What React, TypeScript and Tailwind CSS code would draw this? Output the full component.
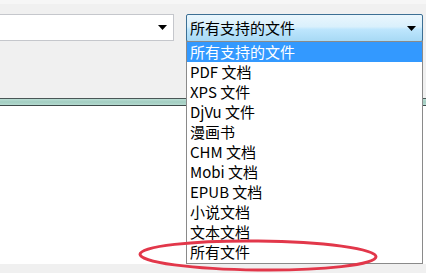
import React from "react";

const items = [
  "所有支持的文件",
  "PDF 文档",
  "XPS 文件",
  "DjVu 文件",
  "漫画书",
  "CHM 文档",
  "Mobi 文档",
  "EPUB 文档",
  "小说文档",
  "文本文档",
  "所有文件",
];

const font = { fontFamily: '"Noto Sans CJK SC", "Noto Sans", sans-serif' };

function Arrow() {
  return (
    <svg width="9" height="5" viewBox="0 0 9 5" className="shrink-0">
      <path d="M0 0 H9 L4.5 5 Z" fill="#000" />
    </svg>
  );
}

export default function App() {
  return (
    <div
      className="relative w-[426px] h-[273px] overflow-hidden bg-[#f0f0f0] flex flex-col text-[15px] text-black"
      style={font}
    >
      <div className="h-[98px] flex flex-col">
        <div className="h-[4px] bg-[#f6f6f6]" />
        <div className="flex items-start pt-[10px]">
          <div className="-ml-[2px] w-[176px] h-[27px] bg-white border border-[#c5c7cc] flex items-center justify-end pr-[6px]">
            <Arrow />
          </div>
          <div className="ml-[12px] w-[237px] h-[28px] rounded-[2px] border border-[#3c6f94] bg-[linear-gradient(#eaf6fd_0%,#d9f0fc_45%,#bee6fd_55%,#a7d9f5_100%)] flex items-center justify-between pl-[3px] pr-[6px] leading-[20px]">
            <span>所有支持的文件</span>
            <Arrow />
          </div>
        </div>
      </div>
      <div className="h-[8px] flex flex-col">
        <div className="h-[1px] bg-[#4a5656]" />
        <div className="h-[6px] bg-[linear-gradient(#b9ddd3,#a2cdc1,#b5dad0)]" />
        <div className="h-[1px] bg-[#3e4a4a]" />
      </div>
      <div className="flex-1 bg-white" />
      <div className="h-[9px] bg-[#f0f0f0]" />

      <div className="absolute left-[186px] top-[41px] w-[237px] h-[223px] bg-white border border-[#8a8a8a] flex flex-col">
        {items.map((t, i) => (
          <div
            key={t}
            className={
              "h-[20px] leading-[20px] pl-[3px] whitespace-nowrap " +
              (i === 0 ? "bg-[#3399ff] text-white" : "")
            }
          >
            {t}
          </div>
        ))}
      </div>

      <svg
        className="absolute left-0 top-0 pointer-events-none"
        width="426"
        height="273"
        viewBox="0 0 426 273"
      >
        <ellipse
          cx="258"
          cy="255.5"
          rx="118"
          ry="14.5"
          fill="none"
          stroke="#e2374a"
          strokeWidth="3"
          transform="rotate(0.6 258 255.5)"
        />
      </svg>
    </div>
  );
}
